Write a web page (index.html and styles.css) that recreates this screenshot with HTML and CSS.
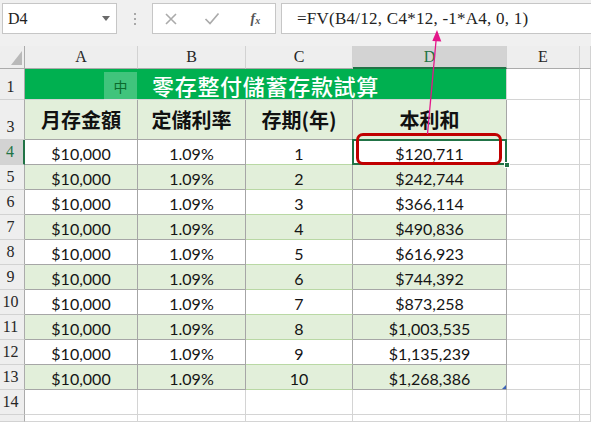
FILE: index.html
```html
<!DOCTYPE html>
<html lang="zh-Hant">
<head>
<meta charset="utf-8">
<title>零存整付儲蓄存款試算</title>
<link rel="stylesheet" href="styles.css">
</head>
<body>
<div class="topbar">
  <div class="namebox"><span>D4</span><span class="dd"></span></div>
  <div class="sep"><i></i><i></i><i></i></div>
  <div class="fbtns">
    <span class="fb b1"><svg width="12" height="12" viewBox="0 0 12 12"><path d="M1 1L11 11M11 1L1 11" stroke="#ABABAB" stroke-width="1.6"/></svg></span>
    <span class="fb b2"><svg width="16" height="13" viewBox="0 0 16 13"><path d="M1.5 7L6 11.5L14.5 1.5" stroke="#ABABAB" stroke-width="1.7" fill="none"/></svg></span>
    <span class="fb b3"><span class="fx">f<sub>x</sub></span></span>
  </div>
  <div class="formula">=FV(B4/12, C4*12, -1*A4, 0, 1)</div>
</div>

<div class="sheet">
  <div class="ch corner"><span class="tri"></span></div>
  <div class="ch">A</div><div class="ch">B</div><div class="ch">C</div><div class="ch sel">D</div><div class="ch">E</div><div class="ch"></div>

  <div class="rh">1</div>
  <div class="title">零存整付儲蓄存款試算<span class="ime">中</span></div>
  <div class="g"></div><div class="g"></div>

  <div class="rh">3</div>
  <div class="c gr hd">月存金額</div><div class="c gr hd">定儲利率</div><div class="c gr hd">存期(年)</div><div class="c gr hd">本利和</div><div class="g"></div><div class="g"></div>

  <div class="rh sel">4</div>
  <div class="c">$10,000</div><div class="c">1.09%</div><div class="c cc">1</div><div class="c active">$120,711<span class="mark"></span><span class="handle"></span></div><div class="g"></div><div class="g"></div>

  <div class="rh">5</div>
  <div class="c gr">$10,000</div><div class="c gr">1.09%</div><div class="c gr cc">2</div><div class="c gr">$242,744</div><div class="g"></div><div class="g"></div>

  <div class="rh">6</div>
  <div class="c">$10,000</div><div class="c">1.09%</div><div class="c cc">3</div><div class="c">$366,114</div><div class="g"></div><div class="g"></div>

  <div class="rh">7</div>
  <div class="c gr">$10,000</div><div class="c gr">1.09%</div><div class="c gr cc">4</div><div class="c gr">$490,836</div><div class="g"></div><div class="g"></div>

  <div class="rh">8</div>
  <div class="c">$10,000</div><div class="c">1.09%</div><div class="c cc">5</div><div class="c">$616,923</div><div class="g"></div><div class="g"></div>

  <div class="rh">9</div>
  <div class="c gr">$10,000</div><div class="c gr">1.09%</div><div class="c gr cc">6</div><div class="c gr">$744,392</div><div class="g"></div><div class="g"></div>

  <div class="rh">10</div>
  <div class="c">$10,000</div><div class="c">1.09%</div><div class="c cc">7</div><div class="c">$873,258</div><div class="g"></div><div class="g"></div>

  <div class="rh">11</div>
  <div class="c gr">$10,000</div><div class="c gr">1.09%</div><div class="c gr cc">8</div><div class="c gr">$1,003,535</div><div class="g"></div><div class="g"></div>

  <div class="rh">12</div>
  <div class="c">$10,000</div><div class="c">1.09%</div><div class="c cc">9</div><div class="c">$1,135,239</div><div class="g"></div><div class="g"></div>

  <div class="rh">13</div>
  <div class="c gr">$10,000</div><div class="c gr">1.09%</div><div class="c gr cc">10</div><div class="c gr corner-mark">$1,268,386</div><div class="g"></div><div class="g"></div>

  <div class="rh">14</div>
  <div class="g"></div><div class="g"></div><div class="g"></div><div class="g"></div><div class="g"></div><div class="g"></div>

  <div class="rh"></div>
  <div class="g"></div><div class="g"></div><div class="g"></div><div class="g"></div><div class="g"></div><div class="g"></div>
</div>

<svg class="arrow" width="591" height="422" viewBox="0 0 591 422">
  <line x1="427.5" y1="134" x2="436.2" y2="39" stroke="#E4168A" stroke-width="1.3"/>
  <polygon points="437,30 432.3,41 441.3,41.5" fill="#E4168A"/>
</svg>
</body>
</html>
```

FILE: styles.css
```css
* { box-sizing: border-box; margin: 0; padding: 0; }

body {
  width: 591px;
  height: 422px;
  overflow: hidden;
  background: #ffffff;
  position: relative;
  font-family: "Lato", "Liberation Sans", sans-serif;
}

/* ---------- formula bar ---------- */
.topbar {
  height: 46px;
  background: #F0F0F0;
  display: flex;
  align-items: flex-start;
  padding: 3px 0 0 2px;
}

.namebox {
  width: 115px;
  height: 31px;
  background: #fff;
  border: 1px solid #C6C6C6;
  display: flex;
  align-items: center;
  padding: 0 6px 0 5px;
  font-family: "Liberation Serif", serif;
  font-size: 16px;
  color: #222;
}

.namebox .dd {
  margin-left: auto;
  width: 0;
  height: 0;
  border-left: 4px solid transparent;
  border-right: 4px solid transparent;
  border-top: 5px solid #6A6A6A;
}

.sep {
  width: 35px;
  height: 31px;
  display: flex;
  flex-direction: column;
  align-items: center;
  justify-content: center;
  gap: 3px;
}

.sep i {
  display: block;
  width: 2px;
  height: 2px;
  background: #A8A8A8;
}

.fbtns {
  width: 124px;
  height: 31px;
  background: #fff;
  border: 1px solid #C6C6C6;
  display: flex;
  align-items: center;
}

.fb {
  display: flex;
  align-items: center;
  justify-content: center;
  height: 100%;
}

.b1 { width: 36px; }
.b2 { width: 48px; }
.b3 { width: 40px; }

.fx {
  font-family: "Liberation Serif", serif;
  font-style: italic;
  font-weight: bold;
  font-size: 14px;
  color: #555;
}

.fx sub {
  font-size: 10px;
  vertical-align: -1px;
}

.formula {
  flex: 1;
  height: 31px;
  margin-left: 5px;
  background: #fff;
  border: 1px solid #C6C6C6;
  border-right: none;
  display: flex;
  align-items: center;
  padding-left: 15px;
  font-family: "Liberation Serif", serif;
  font-size: 17px;
  letter-spacing: 0.25px;
  color: #222;
}

/* ---------- sheet grid ---------- */
.sheet {
  display: grid;
  grid-template-columns: 25px 113px 108px 107px 154px 73px 11px;
  grid-template-rows: 23px 31px 40px repeat(11, 25px) 7px;
}

.ch {
  background: #EEEEEE;
  border-right: 1px solid #D2D2D2;
  border-bottom: 1px solid #ABABAB;
  display: flex;
  align-items: center;
  justify-content: center;
  font-family: "Liberation Serif", serif;
  font-size: 16px;
  color: #262626;
}

.ch.sel {
  background: #D3D3D3;
  color: #217346;
  border-bottom: 2px solid #217346;
}

.corner {
  position: relative;
  border-right-color: #ABABAB;
}

.corner .tri {
  position: absolute;
  right: 2px;
  bottom: 3px;
  width: 0;
  height: 0;
  border-left: 11px solid transparent;
  border-bottom: 14px solid #B9B9B9;
}

.rh {
  background: #EEEEEE;
  border-right: 1px solid #ABABAB;
  border-bottom: 1px solid #D2D2D2;
  display: flex;
  align-items: flex-end;
  justify-content: center;
  padding: 0 3px 2px 0;
  font-family: "Liberation Serif", serif;
  font-size: 16px;
  line-height: 20px;
  color: #262626;
}

.rh.sel {
  background: #D3D3D3;
  color: #217346;
  border-right: 2px solid #217346;
}

.title {
  grid-column: span 4;
  position: relative;
  background: #00B050;
  border-right: 1px solid #D4D4D4;
  border-bottom: 1px solid #D4D4D4;
  display: flex;
  align-items: center;
  justify-content: center;
  padding-top: 2px;
  font-family: "Noto Sans CJK TC", sans-serif;
  font-weight: 500;
  font-size: 22px;
  letter-spacing: 0.7px;
  color: #ffffff;
}

.ime {
  position: absolute;
  left: 79px;
  top: 3px;
  width: 33px;
  height: 28px;
  background: rgba(255, 255, 255, 0.25);
  display: flex;
  align-items: center;
  justify-content: center;
  font-size: 14px;
  font-weight: 400;
  letter-spacing: 0;
  color: #0B6B2C;
}

.g {
  background: #fff;
  border-right: 1px solid #D4D4D4;
  border-bottom: 1px solid #D4D4D4;
}

.c {
  background: #fff;
  border-right: 1px solid #A6A6A6;
  border-bottom: 1px solid #A6A6A6;
  display: flex;
  align-items: center;
  justify-content: center;
  padding-top: 2px;
  font-size: 16px;
  color: #141414;
}

.c.gr { background: #E2EFDA; }

.c.cc { border-bottom-color: #B9D8A4; }

.c.hd {
  padding-top: 0;
  font-family: "Noto Sans CJK TC", sans-serif;
  font-weight: bold;
  font-size: 20px;
  color: #111;
}

.active {
  position: relative;
}

.active::before {
  content: "";
  position: absolute;
  left: -1px;
  top: -1px;
  right: -1px;
  bottom: -1px;
  border: 2px solid #217346;
}

.active .mark {
  position: absolute;
  left: 3px;
  top: -7px;
  width: 146px;
  height: 32px;
  border: 3px solid #C00000;
  border-radius: 7px;
}

.active .handle {
  position: absolute;
  right: -4px;
  bottom: -4px;
  width: 6px;
  height: 6px;
  background: #217346;
  border: 1px solid #fff;
}

.corner-mark {
  position: relative;
}

.corner-mark::after {
  content: "";
  position: absolute;
  right: 0;
  bottom: 0;
  width: 0;
  height: 0;
  border-left: 4px solid transparent;
  border-bottom: 4px solid #3A63B8;
}

.arrow {
  position: absolute;
  left: 0;
  top: 0;
  pointer-events: none;
}
```
